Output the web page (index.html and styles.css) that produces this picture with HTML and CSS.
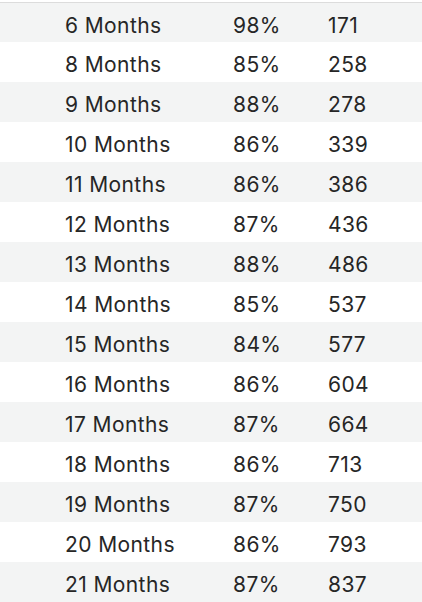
FILE: index.html
```html
<!DOCTYPE html>
<html>
<head>
<meta charset="utf-8">
<link rel="stylesheet" href="styles.css">
</head>
<body>
<div class="table">
  <div class="row shade first"><span>6 Months</span><span>98%</span><span>171</span></div>
  <div class="row"><span>8 Months</span><span>85%</span><span>258</span></div>
  <div class="row shade"><span>9 Months</span><span>88%</span><span>278</span></div>
  <div class="row"><span>10 Months</span><span>86%</span><span>339</span></div>
  <div class="row shade"><span>11 Months</span><span>86%</span><span>386</span></div>
  <div class="row"><span>12 Months</span><span>87%</span><span>436</span></div>
  <div class="row shade"><span>13 Months</span><span>88%</span><span>486</span></div>
  <div class="row"><span>14 Months</span><span>85%</span><span>537</span></div>
  <div class="row shade"><span>15 Months</span><span>84%</span><span>577</span></div>
  <div class="row"><span>16 Months</span><span>86%</span><span>604</span></div>
  <div class="row shade"><span>17 Months</span><span>87%</span><span>664</span></div>
  <div class="row"><span>18 Months</span><span>86%</span><span>713</span></div>
  <div class="row shade"><span>19 Months</span><span>87%</span><span>750</span></div>
  <div class="row"><span>20 Months</span><span>86%</span><span>793</span></div>
  <div class="row shade"><span>21 Months</span><span>87%</span><span>837</span></div>
</div>
</body>
</html>
```

FILE: styles.css
```css
html, body {
  margin: 0;
  padding: 0;
  background: #ffffff;
}
body {
  font-family: Inter, "Liberation Sans", Arial, sans-serif;
  color: #262626;
  overflow: hidden;
}
.table {
  padding-top: 2px;
}
.row {
  box-sizing: border-box;
  height: 40px;
  display: grid;
  grid-template-columns: 168px 95px auto;
  align-items: center;
  padding-left: 65px;
  padding-top: 5px;
  font-size: 21px;
  letter-spacing: 0.4px;
}
.shade {
  background: #f3f4f4;
}
.first {
  border-top: 1px solid #dcdcdc;
}
```
